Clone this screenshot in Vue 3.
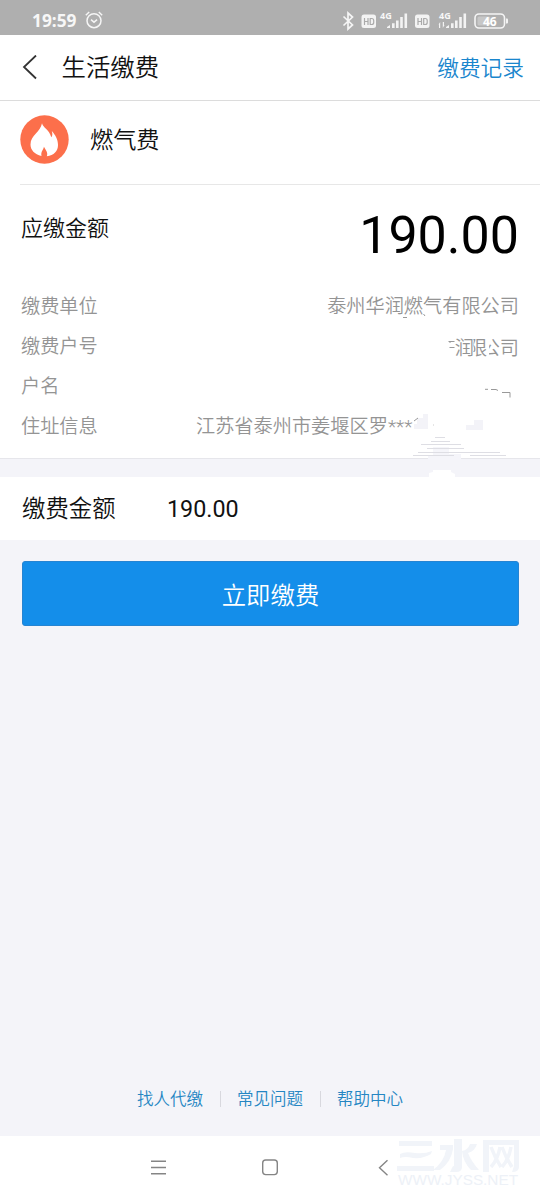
<script setup>
const rows = [
  { label: '缴费单位', value: '泰州华润燃气有限公司' },
  { label: '缴费户号', masked: ['润', '限', '公', '司'] },
  { label: '户名', value: '' },
  { label: '住址信息', value: '江苏省泰州市姜堰区罗', stars: '***' },
]
const links = ['找人代缴', '常见问题', '帮助中心']
</script>

<template>
  <div class="screen">
    <div class="status">
      <span class="clock">19:59</span>
      <svg class="alarm" width="20" height="20" viewBox="0 0 20 20" fill="none" stroke="#f5f5f5" stroke-width="1.5">
        <circle cx="10" cy="10.7" r="7" /><path d="M1.8 5.2 5.2 2M14.8 2l3.4 3.2M7 9.7l3 2.5 3.1-2.5" />
      </svg>
      <svg class="signals" width="200" height="35" viewBox="340 0 200 35">
        <path d="M343.5 16.500l9 8.500-4.500 4V13l4.500 4-9 8.500" fill="none" stroke="#f5f5f5" stroke-width="1.700" />
        <g fill="#f3f3f3">
          <rect x="361.500" y="14.500" width="14.500" height="13.500" rx="2.500" />
          <rect x="415" y="14.500" width="14.500" height="13.500" rx="2.500" />
          <path d="M387 28v-1l3-2V28zM392 28v-4.800h2.600V28zM396 28v-7.500h2.600V28zM400.200 28V17h2.600v11zM404.500 28V13.500h2.600V28z" />
          <path d="M446 28v-1l3-2V28zM451 28v-4.800h2.600V28zM455 28v-7.500h2.600V28zM459.200 28V17h2.600v11zM463.500 28V13.500h2.600V28z" />
          <path d="M438.500 24.500l1.700-2.500v6h-1.200v-3.500zM444.500 25l-1.700 3v-6h1.200v3z" />
          <path d="M506 18.500h1q1 0 1 1v3q0 1-1 1h-1z" />
        </g>
        <g fill="none" stroke="#aaa" stroke-width="1.200">
          <path d="M364.500 18v7M368 18v7M364.500 21.500h3.500M370.200 18.500h1.500q2 0 2 2v2q0 2-2 2h-1.500z" />
          <path d="M418 18v7M421.500 18v7M418 21.500h3.500M423.700 18.500h1.500q2 0 2 2v2q0 2-2 2h-1.500z" />
        </g>
        <rect x="475" y="14" width="29.500" height="14" rx="4" fill="none" stroke="#f5f5f5" stroke-width="1.600" />
        <rect x="477.500" y="16.500" width="13" height="9" rx="1.500" fill="#c7c7c7" />
        <text x="380" y="18.500" class="net">4G</text>
        <text x="439" y="18.500" class="net">4G</text>
        <text x="489.800" y="25.500" class="level" text-anchor="middle">46</text>
      </svg>
    </div>

    <header class="nav">
      <svg class="back" width="18" height="26" viewBox="0 0 18 26" fill="none" stroke="#333" stroke-width="1.800"><path d="M15 .5 3 12l12 11.500" /></svg>
      <h1>生活缴费</h1>
      <a class="history">缴费记录</a>
    </header>

    <section class="bill">
      <div class="kind">
        <svg width="49" height="49" viewBox="0 0 49 49">
          <circle cx="24.500" cy="24.500" r="24.200" fill="#fc6f4b" />
          <path fill="#fff" d="M22 8.300C23.200 13.200 29 14.200 31.300 22.200C32.600 20.700 32.600 18.800 31.800 16C35.500 20.200 38 24.500 38 30C38 36.300 34 40.200 26.800 41.300C28.400 37.700 25.500 34.800 23.900 31.800C23.700 34.500 20.500 36.500 21.500 41C14.500 39.300 10.500 35 10.500 29.500C10.500 20.500 20.500 17 22 8.300Z" />
        </svg>
        <span>燃气费</span>
      </div>
      <div class="due">
        <span class="due-label">应缴金额</span>
        <span class="due-value">190.00</span>
      </div>
      <div class="details">
        <div v-for="row in rows" :key="row.label" class="row">
          <span>{{ row.label }}</span>
          <span v-if="row.masked" class="masked"><b v-for="char in row.masked" :key="char">{{ char }}</b></span>
          <span v-else :class="{ address: row.stars }">{{ row.value }}<i v-if="row.stars">{{ row.stars }}</i></span>
        </div>
      </div>
      <svg class="smudge" width="140" height="200" viewBox="400 285 140 200">
        <path d="M448.500 341.500h6M449.500 347.500h5M450 341v2M403 317.500h4M423.500 314l1.500 2M485 389.300h3M491 389.500h5l2 1M502 392.500h8v5" fill="none" stroke="#999" />
        <path d="M417 418h6v-4h5v15h-14v-5h3zM466 425h8v-5h9v10h-17z" fill="#f3f3f8" />
        <path d="M414 421l4-3" stroke="#999" /><path d="M433 425h1" stroke="#ccc" />
        <path d="M428 460v-5h5v-8h16v7h12v6z" fill="#f5f5fa" />
        <path d="M435 437.500h10M431 441.500h19M421 444.500h40M427 448.500h37M418 452.500h52M413 455.500h41M466 452.500h34M470 455.500h36" stroke="#dedee4" />
        <path d="M429 477v-4l4-1v-2h18v2l4 2v3z" fill="#fff" />
      </svg>
    </section>

    <section class="pay">
      <span class="pay-label">缴费金额</span>
      <span class="pay-value">190.00</span>
    </section>

    <button class="submit">立即缴费</button>

    <nav class="links">
      <a v-for="link in links" :key="link">{{ link }}</a>
    </nav>

    <footer class="system">
      <svg width="540" height="64" viewBox="0 1136 540 64" fill="none" stroke="#858585" stroke-width="1.400">
        <path d="M151 1161.300h15M151 1167.500h15M151 1173.700h15" />
        <rect x="262.700" y="1160" width="14.600" height="14.600" rx="3" />
        <path d="M387.500 1160.200l-8 7.500 8 7.500" />
        <g fill="#f1f4f9" stroke="none">
          <path d="M399 1141h33v5h-33zM400 1154q5-3 15-1 10 1 17-2l-1 3q-8 5-18 4-8-2-13 0zM397 1166h37v5h-37z" />
          <path d="M454 1139h8v28q0 5-6 5h-6l3-6q1 1 1-1zM440 1145h13v4q-2 13-13 21h-7q11-8 13-20h-6zM470 1144h7q-2 7-9 9 3 8 11 17h-8q-8-8-9-19 6-1 8-7z" />
          <path d="M483 1140h36v27q0 5-7 5l2-6v-21h-25v27h-6z" />
        </g>
        <path d="M491 1147q4 11 10 20M500 1147q-2 12-9 20M502 1147q4 11 10 20M511 1147q-2 12-9 20" stroke="#f1f4f9" stroke-width="3.500" />
        <text x="398" y="1185" class="mark" textLength="120" lengthAdjust="spacingAndGlyphs">WWW.JYSS.NET</text>
      </svg>
    </footer>
  </div>
</template>

<style>
body { margin: 0; background: #f4f4f9; }
</style>

<style scoped>
.screen { width: 540px; height: 1200px; display: flex; flex-direction: column; background: #f4f4f9; color: #111; font-family: "Liberation Sans", "Noto Sans CJK SC", sans-serif; font-weight: 350; overflow: hidden; }
.status { height: 35px; flex: none; display: flex; background: #afafaf; color: #f7f7f7; }
.clock { width: 52px; padding-left: 32px; font: 700 17.300px/42px "Noto Sans", sans-serif; }
.alarm { margin-top: 10px; }
.signals { margin-left: auto; }
.net { font: 700 9px "Noto Sans", sans-serif; fill: #f7f7f7; }
.level { font: 700 12px "Noto Sans", sans-serif; fill: #fff; }
.nav { height: 65px; flex: none; display: flex; align-items: center; padding: 0 16px 0 21px; background: #fff; border-bottom: 1px solid #dcdcdc; }
.back { flex: none; }
h1 { margin: 0 auto 0 22.500px; font-size: 24.400px; font-weight: 350; line-height: 36px; }
.history { margin-top: 2px; color: #1a86cd; font-size: 21.700px; line-height: 32px; }
.bill { position: relative; height: 357px; flex: none; background: #fff; border-bottom: 1px solid #e6e6eb; }
.kind { height: 84px; margin-left: 20px; display: flex; align-items: center; border-bottom: 1px solid #e7e7e7; box-sizing: border-box; padding-bottom: 7px; gap: 21px; font-size: 23.200px; }
.kind span { margin-bottom: 2px; }
.due { height: 100px; padding: 0 21px; display: flex; justify-content: space-between; align-items: center; box-sizing: border-box; }
.due-label { font-size: 22px; margin-bottom: 18px; }
.due-value { font: 52px/60px Roboto, sans-serif; color: #000; padding-top: 2px; }
.details { padding: 0 21px; }
.row { height: 40px; display: flex; justify-content: space-between; align-items: center; font-size: 19.200px; color: #949494; }
.masked { display: flex; padding-top: 4px; }
.masked b { font-weight: 350; }
.masked b:nth-child(2) { margin: 0 -6.500px 0 -6px; clip-path: inset(0 0 0 5.500px); }
.masked b:nth-child(3) { clip-path: inset(0 0 0 8.500px); }
.address { width: 323px; }
.address i { font-style: normal; font-family: Roboto, sans-serif; }
.smudge { position: absolute; left: 400px; top: 184px; }
.pay { height: 63px; flex: none; margin-top: 18px; background: #fff; display: flex; align-items: center; padding-left: 22px; box-sizing: border-box; }
.pay-label { width: 145px; font-size: 23.400px; padding-bottom: 3px; }
.pay-value { font: 23.300px/30px Roboto, sans-serif; padding-top: 1px; }
.submit { height: 65px; flex: none; margin: 21px 21px 0 22px; padding: 0 0 1px; border: 1px solid #2684d2; border-radius: 3px; background: #148eea; color: #fff; font: 350 24.400px "Liberation Sans", "Noto Sans CJK SC", sans-serif; }
.links { margin-top: auto; margin-bottom: 24px; display: flex; justify-content: center; font-size: 16.500px; line-height: 26px; color: #2586c3; }
.links a { display: flex; align-items: center; }
.links a + a::before { content: ""; width: 1px; height: 16px; margin: 0 16.500px; background: #d8d8de; }
.system { height: 64px; flex: none; background: #fff; }
.system svg { display: block; }
.mark { font: 15px "Liberation Sans", sans-serif; fill: #edf1f7; stroke: none; }
</style>
